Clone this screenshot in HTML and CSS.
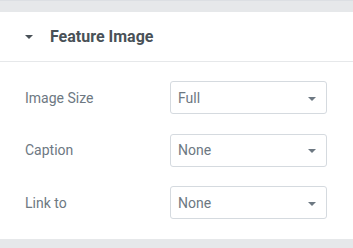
FILE: index.html
```html
<!DOCTYPE html>
<html>
<head>
<meta charset="utf-8">
<link rel="stylesheet" href="styles.css">
</head>
<body>
<div class="page">
  <div class="panel">
    <div class="head">
      <span class="caret"></span>
      <span class="title">Feature Image</span>
    </div>
    <div class="controls">
      <div class="row">
        <span class="label">Image Size</span>
        <div class="select"><span>Full</span><span class="arrow"></span></div>
      </div>
      <div class="row">
        <span class="label">Caption</span>
        <div class="select"><span>None</span><span class="arrow"></span></div>
      </div>
      <div class="row">
        <span class="label">Link to</span>
        <div class="select"><span>None</span><span class="arrow"></span></div>
      </div>
    </div>
  </div>
</div>
</body>
</html>
```
FILE: styles.css
```css
html, body {
  margin: 0;
  padding: 0;
  background: #e6e8ea;
  font-family: Roboto, "Liberation Sans", sans-serif;
}
.page {
  width: 353px;
  height: 248px;
  border-top: 1px solid #dcdfe3;
  box-sizing: border-box;
  padding-top: 11px;
}
.panel {
  background: #fff;
  height: 227px;
}
.head {
  height: 49px;
  border-bottom: 1px solid #e6e8ea;
  display: flex;
  align-items: center;
  padding-left: 25px;
}
.caret {
  width: 0;
  height: 0;
  border-left: 4px solid transparent;
  border-right: 4px solid transparent;
  border-top: 4px solid #495157;
  margin-right: 17px;
  margin-top: 1px;
}
.title {
  font-size: 16px;
  font-weight: 700;
  color: #495157;
}
.controls {
  padding: 19px 26px 0 25px;
  display: flex;
  flex-direction: column;
  gap: 19.5px;
}
.row {
  display: flex;
  align-items: center;
  justify-content: space-between;
  height: 33px;
}
.label {
  font-size: 14px;
  color: #6d7882;
}
.select {
  width: 157px;
  height: 33px;
  box-sizing: border-box;
  border: 1px solid #d5dadf;
  border-radius: 3px;
  display: flex;
  align-items: center;
  justify-content: space-between;
  padding: 0 10px 0 7px;
  font-size: 14px;
  color: #6d7882;
}
.arrow {
  width: 0;
  height: 0;
  border-left: 4px solid transparent;
  border-right: 4px solid transparent;
  border-top: 4px solid #6d7882;
  margin-top: 2px;
}
```
